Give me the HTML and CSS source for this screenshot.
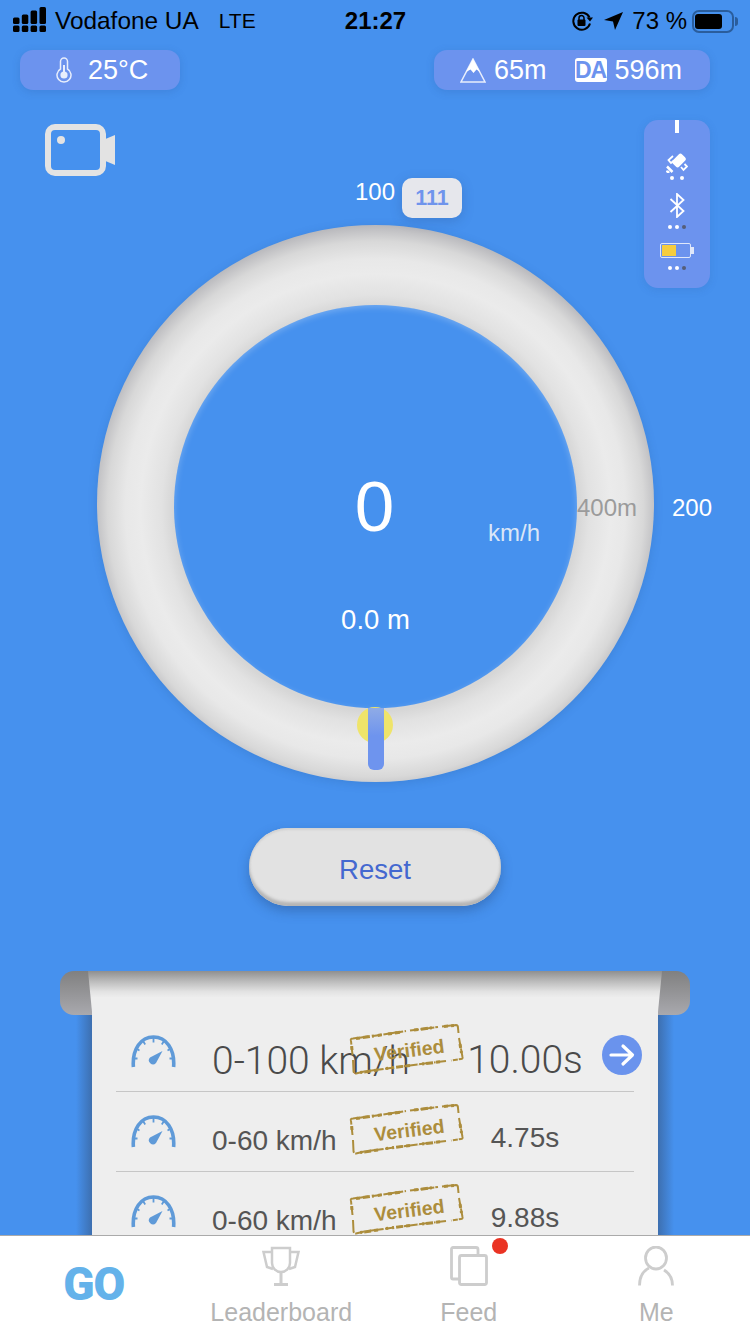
FILE: index.html
```html
<!DOCTYPE html>
<html lang="en">

<head>
    <meta charset="UTF-8">
    <meta name="viewport" content="width=device-width, initial-scale=1.0">
    <title>Drag Meter</title>
    <link rel="stylesheet" href="styles.css">
</head>

<body>
    <svg class="defs" width="0" height="0">
        <symbol id="dial" viewBox="0 0 45 33">
            <path d="M2.4 32 C1 14 10 2 22.5 2 C35 2 44 14 42.6 32" fill="none" stroke="currentColor" stroke-width="3.600"/>
            <path d="M22.500 3v4.500M12 6l2.200 3.500M33 6l-2.200 3.500M5 13.500l3.500 2M40 13.500l-3.500 2M2.500 23.500h4M42.500 23.500h-4" fill="none" stroke="currentColor" stroke-width="1.800"/>
            <path d="M31.500 16 L25 28 A3.800 3.800 0 1 1 19 22.500 Z" fill="currentColor"/>
        </symbol>
        <symbol id="stamp" viewBox="0 0 116 52">
            <path d="M3 17 Q2 14.500 5 14.500 L20 12.500 M25 12 L58 7 M62 6.500 L90 3 M94 2.500 L108 1 Q110 1 110 4 L110.500 9 M111 14 L114.500 33 Q115 35 113 35 L103 36.500 M98 37 L86 38.500 M80 39 L50 43 M46 43.500 L20 47 M16 47.500 L8 49.500 Q6 50 5.500 47 L5 36 M4.500 31 L3 17" fill="none" stroke="currentColor" stroke-width="2" stroke-dasharray="9 1.500 14 1 5 1.500 11 1"/>
            <path d="M8 14.500 L34 10.800 M40 10 L52 8.200 M66 6 L84 3.800 M96 2.500 L106 1.500 M112 20 L113.500 29 M92 37.800 L70 40.500 M62 41.500 L38 44.500 M30 46 L12 48.500 M4 26 L3.500 20" fill="none" stroke="currentColor" stroke-width="3" stroke-dasharray="4 3 7 2 2 4"/>
        </symbol>
    </svg>

    <div class="screen">
        <div class="status">
            <div class="status-left">
                <svg class="signal" width="33" height="25" viewBox="0 0 33 25" fill="#000">
                    <rect x="0" y="18.500" width="6.500" height="6.500" rx="1.500"/>
                    <rect x="8.800" y="18.500" width="6.500" height="6.500" rx="1.500"/>
                    <rect x="17.600" y="18.500" width="6.500" height="6.500" rx="1.500"/>
                    <rect x="26.500" y="18.500" width="6.500" height="6.500" rx="1.500"/>
                    <rect x="0" y="10.500" width="6.500" height="6.500" rx="1.500"/>
                    <rect x="8.800" y="7.500" width="6.500" height="9.500" rx="1.500"/>
                    <rect x="17.600" y="3.500" width="6.500" height="13.500" rx="1.500"/>
                    <rect x="26.500" y="0" width="6.500" height="17" rx="1.500"/>
                </svg>
                <span class="carrier">Vodafone UA</span>
                <span class="net">LTE</span>
            </div>
            <div class="clock">21:27</div>
            <div class="status-right">
                <svg width="22" height="20" viewBox="0 0 22 20">
                    <path d="M19 12.500 A8.500 8.500 0 1 1 18.500 6.500" fill="none" stroke="#000" stroke-width="2"/>
                    <path d="M15.500 6.500 L22 6.500 L19 10.500 Z" fill="#000"/>
                    <rect x="6.500" y="8.500" width="8" height="6.500" rx="1" fill="#000"/>
                    <path d="M8 9 V7 A2.500 2.500 0 0 1 13 7 V9" fill="none" stroke="#000" stroke-width="1.500"/>
                </svg>
                <svg class="arrow-loc" width="19" height="18" viewBox="0 0 19 18">
                    <path d="M19 0 L11 18 L9 9.500 L0 8 Z" fill="#000"/>
                </svg>
                <span class="pct">73 %</span>
                <div class="batt"><div class="batt-fill"></div></div>
            </div>
        </div>

        <div class="pills">
            <div class="pill pill-temp">
                <svg width="16" height="26" viewBox="0 0 16 26" fill="none" stroke="#e8eefc" stroke-width="1.500">
                    <path d="M4.500 12 V4.500 A3.500 3.500 0 0 1 11.500 4.500 V12 A7 7 0 1 1 4.500 12 Z"/>
                    <circle cx="8" cy="18" r="3.600" fill="#e8eefc" stroke="none"/>
                    <path d="M8 8 V17" stroke-width="2"/>
                </svg>
                <span>25°C</span>
            </div>
            <div class="pill pill-alt">
                <svg width="26" height="25" viewBox="0 0 26 25">
                    <path d="M13 1 L25 24 H1 Z" fill="none" stroke="#e8eefc" stroke-width="1.500"/>
                    <path d="M13 1 L20 14 L16.500 11.500 L13.500 15 L10.500 11.500 L6 14 Z" fill="#fff"/>
                </svg>
                <span class="alt-val">65m</span>
                <span class="da">DA</span>
                <span>596m</span>
            </div>
        </div>

        <div class="tools">
            <svg class="camera" width="70" height="52" viewBox="0 0 70 52">
                <rect x="3" y="3" width="55" height="46" rx="7" fill="none" stroke="#e3e3e3" stroke-width="6"/>
                <circle cx="16" cy="16" r="4" fill="#e3e3e3"/>
                <path d="M58 16 L70 11 V41 L58 36 Z" fill="#e3e3e3"/>
            </svg>
            <div class="sensors">
                <div class="tick"></div>
                <svg class="sat" width="22" height="20" viewBox="0 0 22 20">
                    <rect x="8.500" y="1" width="9" height="13" rx="2.500" transform="rotate(45 13 7.500)" fill="#fff"/>
                    <path d="M7 3 L2.500 7 L5 10 L8 7.500 M15 14 L17.500 17 L21 13.500 L18.500 11" fill="none" stroke="#fff" stroke-width="1.800"/>
                    <path d="M1 13.500 L6.500 19 M1 17.500 A2.500 2.500 0 0 0 3.500 19.500" fill="none" stroke="#fff" stroke-width="2.500"/>
                </svg>
                <div class="dots"><i></i><i></i></div>
                <svg class="bt" width="16" height="25" viewBox="0 0 16 25">
                    <path d="M1.500 6 L14.500 18 L8 24 V1 L14.500 7 L1.500 19" fill="none" stroke="#fff" stroke-width="1.800"/>
                </svg>
                <div class="dots"><i></i><i></i><i class="off"></i></div>
                <div class="mini-batt"><div class="mini-fill"></div></div>
                <div class="dots"><i></i><i></i><i class="off"></i></div>
            </div>
        </div>

        <div class="gauge">
            <span class="mark mark-100">100</span>
            <span class="badge">111</span>
            <span class="mark mark-200">200</span>
            <span class="mark mark-400">400m</span>
            <div class="disc">
                <div class="speed">0</div>
                <div class="dist">0.0 m</div>
                <span class="unit">km/h</span>
            </div>
            <div class="sun"></div>
            <div class="needle"></div>
        </div>

        <button class="reset">Reset</button>

        <div class="scroll">
            <div class="ear ear-left"></div>
            <div class="ear ear-right"></div>
            <div class="scroll-head"></div>
            <div class="paper">
                <div class="row row-big">
                    <svg class="dial" width="45" height="33"><use href="#dial"/></svg>
                    <span class="label">0-100 km/h</span>
                    <span class="val">10.00s</span>
                    <div class="go-btn">
                        <svg width="26" height="24" viewBox="0 0 26 24">
                            <path d="M2 12 H23 M14 3 L23.500 12 L14 21" fill="none" stroke="#fff" stroke-width="3.200" stroke-linecap="round" stroke-linejoin="round"/>
                        </svg>
                    </div>
                    <div class="verified">
                        <svg width="116" height="52"><use href="#stamp"/></svg>
                        <span>Verified</span>
                    </div>
                </div>
                <div class="row">
                    <svg class="dial" width="45" height="33"><use href="#dial"/></svg>
                    <span class="label">0-60 km/h</span>
                    <span class="val">4.75s</span>
                    <div class="verified">
                        <svg width="116" height="52"><use href="#stamp"/></svg>
                        <span>Verified</span>
                    </div>
                </div>
                <div class="row">
                    <svg class="dial" width="45" height="33"><use href="#dial"/></svg>
                    <span class="label">0-60 km/h</span>
                    <span class="val">9.88s</span>
                    <div class="verified">
                        <svg width="116" height="52"><use href="#stamp"/></svg>
                        <span>Verified</span>
                    </div>
                </div>
            </div>
        </div>

        <nav class="tabs">
            <div class="tab tab-go">GO</div>
            <div class="tab">
                <svg width="38" height="40" viewBox="0 0 38 40" fill="none" stroke="#cdcdcd" stroke-width="2.500">
                    <path d="M10 2 H28 V17 A9 9 0 0 1 10 17 Z"/>
                    <path d="M10 6 H1.500 L5 21 L11 23 M28 6 H36.500 L33 21 L27 23"/>
                    <path d="M19 26 V37" stroke-width="3"/>
                    <path d="M12 38.500 H26" stroke-width="3"/>
                </svg>
                <span>Leaderboard</span>
            </div>
            <div class="tab">
                <div class="feed-icon">
                    <svg width="38" height="40" viewBox="0 0 38 40" fill="none" stroke="#cdcdcd" stroke-width="2.800">
                        <path d="M9 33 H3 A1.500 1.500 0 0 1 1.500 31.500 V3 A1.500 1.500 0 0 1 3 1.500 H26 A2 2 0 0 1 28 3.500 V9"/>
                        <rect x="9.500" y="9.500" width="27" height="29" rx="2"/>
                    </svg>
                    <i class="red-dot"></i>
                </div>
                <span>Feed</span>
            </div>
            <div class="tab">
                <svg width="36" height="40" viewBox="0 0 36 40" fill="none" stroke="#cdcdcd" stroke-width="2.800">
                    <ellipse cx="18" cy="12" rx="10.500" ry="11"/>
                    <path d="M11 22 C5 25 1.500 31 1.500 39.500 M26 24 C31 27 34.500 32 34.500 39.500"/>
                </svg>
                <span>Me</span>
            </div>
        </nav>
    </div>
</body>

</html>
```

FILE: styles.css
```css
* {
    box-sizing: border-box;
}

body {
    margin: 0;
    font-family: "Liberation Sans", Arial, sans-serif;
}

.defs {
    position: absolute;
}

.screen {
    width: 750px;
    height: 1334px;
    background-color: #4691ee;
    display: flex;
    flex-direction: column;
    position: relative;
    overflow: hidden;
}

/* status bar */
.status {
    height: 42px;
    padding: 0 12px 0 13px;
    display: grid;
    grid-template-columns: 1fr auto 1fr;
    align-items: center;
    color: #000;
    font-size: 24px;
}

.status-left,
.status-right {
    display: flex;
    align-items: center;
}

.status-right {
    justify-content: flex-end;
}

.signal {
    margin: -4px 9px 0 0;
}

.carrier {
    font-size: 24.400px;
}

.net {
    margin-left: 20px;
    font-size: 21px;
}

.clock {
    font-weight: bold;
}

.arrow-loc {
    margin-left: 11px;
}

.pct {
    margin-left: 9px;
}

.batt {
    width: 42px;
    height: 23px;
    margin: 0 4px 0 5px;
    padding: 2px 1px;
    border: 2px solid #2a5d9c;
    border-radius: 7px;
    position: relative;
}

.batt::after {
    content: "";
    position: absolute;
    right: -6px;
    top: 5px;
    width: 3px;
    height: 9px;
    border-radius: 0 3px 3px 0;
    background-color: #2a5d9c;
}

.batt-fill {
    width: 27px;
    height: 100%;
    background-color: #000;
    border-radius: 3px;
}

/* top pills */
.pills {
    margin-top: 8px;
    padding: 0 40px 0 20px;
    display: flex;
    justify-content: space-between;
}

.pill {
    height: 40px;
    background-color: #6c93ee;
    border-radius: 13px;
    box-shadow: 0 2px 8px rgba(40, 80, 150, .2);
    color: #fff;
    font-size: 27px;
    display: flex;
    align-items: center;
}

.pill-temp {
    width: 160px;
    padding-left: 36px;
    gap: 16px;
}

.pill-alt {
    width: 276px;
    padding-left: 26px;
}

.alt-val {
    margin-left: 8px;
}

.da {
    width: 32px;
    height: 24px;
    margin: 0 8px 0 28px;
    background-color: #fff;
    border-radius: 3px;
    color: #6c93ee;
    font-size: 23px;
    font-weight: bold;
    line-height: 24px;
    letter-spacing: -1px;
    text-align: center;
}

/* camera + sensors */
.tools {
    height: 135px;
    padding: 30px 40px 0 45px;
    display: flex;
    justify-content: space-between;
    align-items: flex-start;
}

.camera {
    margin-top: 4px;
}

.sensors {
    width: 66px;
    height: 168px;
    background-color: #6c93ee;
    border-radius: 14px;
    box-shadow: 0 2px 8px rgba(40, 80, 150, .15);
    display: flex;
    flex-direction: column;
    align-items: center;
    position: relative;
    z-index: 2;
}

.tick {
    width: 4px;
    height: 13px;
    background-color: #fff;
}

.sat {
    margin-top: 20px;
}

.dots {
    display: flex;
    justify-content: center;
    gap: 3px;
    height: 4px;
    margin-top: 3px;
}

.sat + .dots {
    gap: 6px;
}

.dots i {
    width: 4px;
    height: 4px;
    border-radius: 50%;
    background-color: #fff;
}

.dots i.off {
    background-color: #555e78;
}

.bt {
    margin-top: 13px;
}

.bt + .dots {
    margin-top: 7px;
}

.mini-batt {
    width: 31px;
    height: 15px;
    margin: 14px 3px 0 0;
    padding: 1px;
    border: 1px solid #dfe7fa;
    border-radius: 2px;
    position: relative;
}

.mini-batt::after {
    content: "";
    position: absolute;
    right: -4px;
    top: 3px;
    width: 3px;
    height: 7px;
    background-color: #dfe7fa;
}

.mini-fill {
    width: 14px;
    height: 100%;
    background-color: #f6cd3e;
}

.mini-batt + .dots {
    margin-top: 8px;
}

/* main gauge */
.gauge {
    width: 557px;
    height: 557px;
    margin-left: 97px;
    border-radius: 50%;
    background: radial-gradient(circle 284px at 50% 51%, #d6d6d6 202px, #e2e2e2 214px, #ebebeb 235px, #e8e8e8 250px, #d8d8d8 268px, #b8b8bc 284px);
    box-shadow: 0 2px 10px rgba(30, 70, 130, .18);
    display: flex;
    align-items: center;
    justify-content: center;
    position: relative;
}

.disc {
    width: 403px;
    height: 403px;
    margin-top: 6px;
    border-radius: 50%;
    background-color: #4691ee;
    box-shadow: inset 0 2px 6px rgba(255, 255, 255, .25);
    color: #fff;
    display: flex;
    flex-direction: column;
    align-items: center;
    position: relative;
}

.speed {
    margin-top: 162px;
    margin-right: 2px;
    font-size: 71px;
    line-height: 80px;
}

.dist {
    margin-top: 58px;
    font-size: 27.500px;
    line-height: 30px;
}

.unit {
    position: absolute;
    left: 314px;
    top: 215px;
    font-size: 24px;
    line-height: 26px;
    color: #dbe6f7;
}

.mark {
    position: absolute;
    font-size: 24px;
    line-height: 28px;
    color: #fff;
}

.mark-100 {
    left: 258px;
    top: -47px;
}

.mark-200 {
    left: 575px;
    top: 269px;
}

.mark-400 {
    left: 480px;
    top: 269px;
    color: #9b9b9b;
    z-index: 1;
}

.badge {
    position: absolute;
    left: 305px;
    top: -47px;
    width: 60px;
    height: 40px;
    background-color: #e6e7ec;
    border-radius: 10px;
    box-shadow: 0 3px 12px rgba(40, 70, 130, .25);
    color: #6f94ec;
    font-size: 21.500px;
    font-weight: bold;
    line-height: 40px;
    text-align: center;
}

.sun {
    position: absolute;
    left: 260px;
    top: 482px;
    width: 36px;
    height: 36px;
    border-radius: 50%;
    background-color: #efe46a;
}

.needle {
    position: absolute;
    left: 271px;
    top: 483px;
    width: 16px;
    height: 62px;
    background: linear-gradient(#8fabe6, #6e94ee 45%);
    border-radius: 0 0 6px 6px;
}

.reset {
    width: 252px;
    height: 78px;
    margin: 46px 0 0 249px;
    padding: 5px 0 0;
    border: 0;
    border-radius: 39px;
    background-color: #e2e2e2;
    box-shadow: inset 0 -4px 3px #b5b5b5, inset 0 2px 2px #d2d2d2, 0 5px 12px rgba(30, 60, 110, .35);
    color: #4468d0;
    font-family: inherit;
    font-size: 27.500px;
}

/* scroll with the results */
.scroll {
    flex: none;
    width: 566px;
    margin: 65px 0 0 92px;
    position: relative;
}

.ear {
    position: absolute;
    top: 0;
    width: 32px;
    height: 44px;
    background: linear-gradient(#808080, #a9a9ae);
    z-index: 1;
}

.ear-left {
    left: -32px;
    border-radius: 14px 0 0 14px;
}

.ear-right {
    right: -32px;
    border-radius: 0 14px 14px 0;
}

.scroll-head {
    height: 41px;
    margin: 0 -4px;
    background: linear-gradient(#8f8f8f, #bbbbbb 25%, #e2e2e2 50%, #eeeeee 65%);
    clip-path: polygon(0 0, 100% 0, 99.3% 100%, .7% 100%);
    position: relative;
    z-index: 2;
}

.paper {
    height: 300px;
    padding: 0 24px;
    background-color: #eeeeee;
    position: relative;
}

/* shade the paper throws on the blue at both sides */
.paper::before,
.paper::after {
    content: "";
    position: absolute;
    top: 0;
    bottom: 0;
    width: 16px;
}

.paper::before {
    left: -16px;
    background: linear-gradient(to left, rgba(50, 70, 100, .45), rgba(50, 70, 100, 0));
}

.paper::after {
    right: -16px;
    background: linear-gradient(to right, rgba(50, 70, 100, .45), rgba(50, 70, 100, 0));
}

.row {
    height: 80px;
    border-bottom: 1px solid #c6c6c6;
    display: grid;
    grid-template-columns: 96px 254px 118px 50px;
    align-items: center;
    color: #555;
    font-size: 28px;
    position: relative;
}

.row-big {
    color: #4a4a4a;
    font-family: Roboto, sans-serif;
    font-size: 39px;
    font-weight: 300;
}

.dial {
    margin-left: 15px;
    color: #5f9ad8;
}

.label {
    padding-top: 19px;
    white-space: nowrap;
}

.val {
    padding-top: 13px;
    text-align: center;
}

.row-big .val {
    padding-top: 17px;
}

.go-btn {
    width: 40px;
    height: 40px;
    margin: 6px 0 0 18px;
    border-radius: 50%;
    background-color: #6a93ed;
    display: flex;
    align-items: center;
    justify-content: center;
}

.verified {
    position: absolute;
    left: 232px;
    top: 12px;
    width: 116px;
    height: 52px;
    color: #ac8d3c;
}

.verified span {
    position: absolute;
    left: 26px;
    top: 14px;
    font-family: "Liberation Sans", Arial, sans-serif;
    font-size: 19.500px;
    font-weight: bold;
    line-height: 24px;
    transform: rotate(-7deg);
}

/* tab bar */
.tabs {
    position: absolute;
    left: 0;
    right: 0;
    bottom: 0;
    height: 99px;
    padding-top: 10px;
    background-color: #fff;
    border-top: 1px solid #aaa;
    display: grid;
    grid-template-columns: repeat(4, 1fr);
    z-index: 3;
}

.tab {
    display: flex;
    flex-direction: column;
    align-items: center;
    gap: 12px;
    color: #b4b4b4;
    font-size: 25px;
    line-height: 28px;
}

.tab-go {
    padding-top: 13px;
    color: #64b2ea;
    font-family: Roboto, sans-serif;
    font-size: 46px;
    font-weight: 900;
    line-height: 50px;
    letter-spacing: -1px;
}

.feed-icon {
    height: 40px;
    position: relative;
}

.red-dot {
    position: absolute;
    left: 42px;
    top: -8px;
    width: 16px;
    height: 16px;
    border-radius: 50%;
    background-color: #ea3323;
}
```
